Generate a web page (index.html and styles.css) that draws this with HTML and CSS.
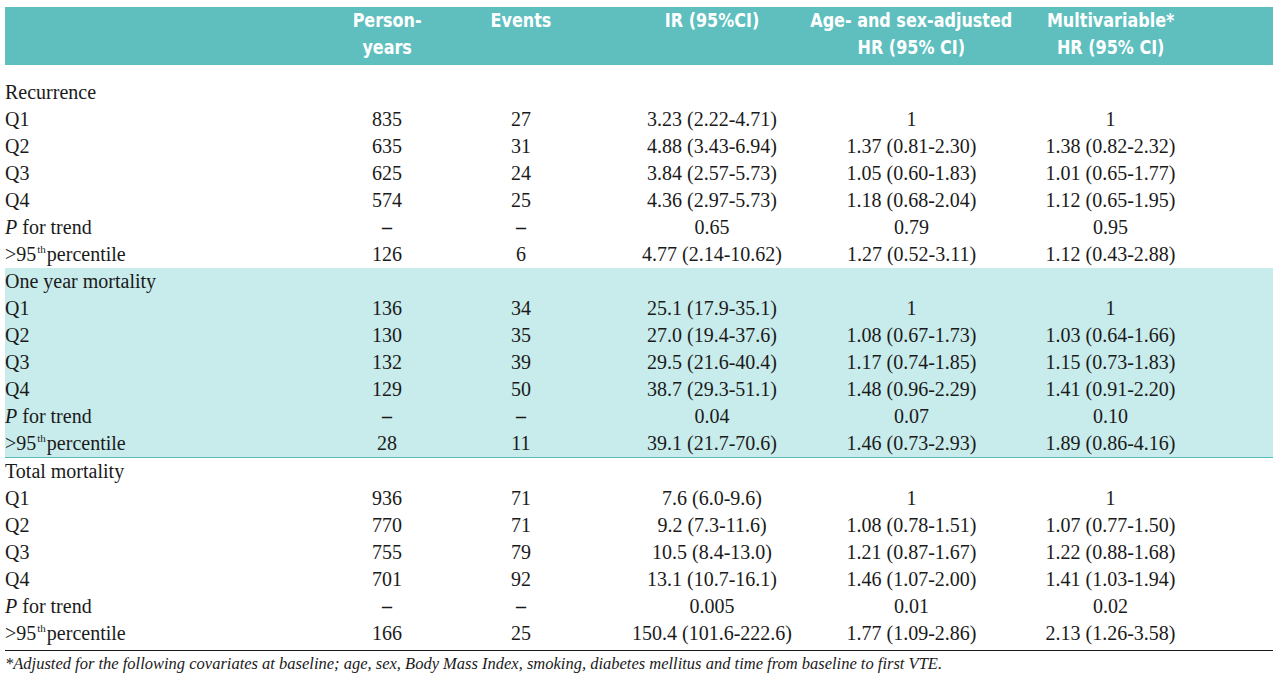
FILE: index.html
```html
<!DOCTYPE html>
<html lang="en">
<head>
<meta charset="utf-8">
<title>Table</title>
<link rel="stylesheet" href="styles.css">
</head>
<body>
<div class="page">
<table class="tbl">
  <colgroup>
    <col class="c-label"><col class="c-py"><col class="c-ev"><col class="c-ir"><col class="c-age"><col class="c-mv">
  </colgroup>
  <thead>
    <tr class="head">
      <th></th>
      <th><span class="hx">Person-<br>years</span></th>
      <th><span class="hx">Events</span></th>
      <th class="ir"><span class="hx">IR (95%CI)</span></th>
      <th><span class="hx">Age- and sex-adjusted<br>HR (95% CI)</span></th>
      <th class="mv"><span class="hx">Multivariable*<br>HR (95% CI)</span></th>
    </tr>
  </thead>
  <tbody class="sec first">
    <tr><td class="lbl">Recurrence</td><td></td><td></td><td class="ir"></td><td></td><td class="mv"></td></tr>
    <tr><td class="lbl">Q1</td><td>835</td><td>27</td><td class="ir">3.23 (2.22-4.71)</td><td>1</td><td class="mv">1</td></tr>
    <tr><td class="lbl">Q2</td><td>635</td><td>31</td><td class="ir">4.88 (3.43-6.94)</td><td>1.37 (0.81-2.30)</td><td class="mv">1.38 (0.82-2.32)</td></tr>
    <tr><td class="lbl">Q3</td><td>625</td><td>24</td><td class="ir">3.84 (2.57-5.73)</td><td>1.05 (0.60-1.83)</td><td class="mv">1.01 (0.65-1.77)</td></tr>
    <tr><td class="lbl">Q4</td><td>574</td><td>25</td><td class="ir">4.36 (2.97-5.73)</td><td>1.18 (0.68-2.04)</td><td class="mv">1.12 (0.65-1.95)</td></tr>
    <tr><td class="lbl"><i>P</i> for trend</td><td class="dash">–</td><td class="dash">–</td><td class="ir">0.65</td><td>0.79</td><td class="mv">0.95</td></tr>
    <tr><td class="lbl">&gt;95<sup>th</sup>percentile</td><td>126</td><td>6</td><td class="ir">4.77 (2.14-10.62)</td><td>1.27 (0.52-3.11)</td><td class="mv">1.12 (0.43-2.88)</td></tr>
  </tbody>
  <tbody class="sec shaded">
    <tr><td class="lbl">One year mortality</td><td></td><td></td><td class="ir"></td><td></td><td class="mv"></td></tr>
    <tr><td class="lbl">Q1</td><td>136</td><td>34</td><td class="ir">25.1 (17.9-35.1)</td><td>1</td><td class="mv">1</td></tr>
    <tr><td class="lbl">Q2</td><td>130</td><td>35</td><td class="ir">27.0 (19.4-37.6)</td><td>1.08 (0.67-1.73)</td><td class="mv">1.03 (0.64-1.66)</td></tr>
    <tr><td class="lbl">Q3</td><td>132</td><td>39</td><td class="ir">29.5 (21.6-40.4)</td><td>1.17 (0.74-1.85)</td><td class="mv">1.15 (0.73-1.83)</td></tr>
    <tr><td class="lbl">Q4</td><td>129</td><td>50</td><td class="ir">38.7 (29.3-51.1)</td><td>1.48 (0.96-2.29)</td><td class="mv">1.41 (0.91-2.20)</td></tr>
    <tr><td class="lbl"><i>P</i> for trend</td><td class="dash">–</td><td class="dash">–</td><td class="ir">0.04</td><td>0.07</td><td class="mv">0.10</td></tr>
    <tr class="last"><td class="lbl">&gt;95<sup>th</sup>percentile</td><td>28</td><td>11</td><td class="ir">39.1 (21.7-70.6)</td><td>1.46 (0.73-2.93)</td><td class="mv">1.89 (0.86-4.16)</td></tr>
  </tbody>
  <tbody class="sec final">
    <tr><td class="lbl">Total mortality</td><td></td><td></td><td class="ir"></td><td></td><td class="mv"></td></tr>
    <tr><td class="lbl">Q1</td><td>936</td><td>71</td><td class="ir">7.6 (6.0-9.6)</td><td>1</td><td class="mv">1</td></tr>
    <tr><td class="lbl">Q2</td><td>770</td><td>71</td><td class="ir">9.2 (7.3-11.6)</td><td>1.08 (0.78-1.51)</td><td class="mv">1.07 (0.77-1.50)</td></tr>
    <tr><td class="lbl">Q3</td><td>755</td><td>79</td><td class="ir">10.5 (8.4-13.0)</td><td>1.21 (0.87-1.67)</td><td class="mv">1.22 (0.88-1.68)</td></tr>
    <tr><td class="lbl">Q4</td><td>701</td><td>92</td><td class="ir">13.1 (10.7-16.1)</td><td>1.46 (1.07-2.00)</td><td class="mv">1.41 (1.03-1.94)</td></tr>
    <tr><td class="lbl"><i>P</i> for trend</td><td class="dash">–</td><td class="dash">–</td><td class="ir">0.005</td><td>0.01</td><td class="mv">0.02</td></tr>
    <tr class="last"><td class="lbl">&gt;95<sup>th</sup>percentile</td><td>166</td><td>25</td><td class="ir">150.4 (101.6-222.6)</td><td>1.77 (1.09-2.86)</td><td class="mv">2.13 (1.26-3.58)</td></tr>
  </tbody>
</table>
<p class="note">*Adjusted for the following covariates at baseline; age, sex, Body Mass Index, smoking, diabetes mellitus and time from baseline to first VTE.</p>
</div>
</body>
</html>
```

FILE: styles.css
```css
html, body {
  margin: 0;
  padding: 0;
  background: #ffffff;
}

.page {
  padding: 7px 7px 0 5px;
}

.tbl {
  width: 1268px;
  border-collapse: collapse;
  table-layout: fixed;
  font-family: "Liberation Serif", "Times New Roman", serif;
  font-size: 20px;
  color: #1a1a1a;
}

.c-label { width: 315px; }
.c-py { width: 134px; }
.c-ev { width: 134px; }
.c-ir { width: 224px; }
.c-age { width: 199px; }
.c-mv { width: 262px; }

.head th {
  background: #5fbfbf;
  color: #ffffff;
  font-family: "DejaVu Sans", "Liberation Sans", sans-serif;
  font-weight: bold;
  font-size: 20px;
  line-height: 27px;
  vertical-align: top;
  text-align: center;
  padding: 0 0 4px 0;
  height: 54px;
  white-space: nowrap;
}

.hx {
  display: inline-block;
  margin: 0 -60px;
  transform: scaleX(0.8);
  transform-origin: 50% 50%;
}

.tbl td {
  padding: 0;
  height: 27px;
  line-height: 27px;
  text-align: center;
  white-space: nowrap;
  vertical-align: middle;
}

.tbl td.lbl {
  text-align: left;
}

.tbl .ir { padding-left: 24px; }
.tbl .mv { padding-right: 63px; }

.first tr:first-child td {
  padding-top: 14px;
}

.shaded tr td {
  background: #c8ebeb;
}

.shaded tr.last td {
  border-bottom: 1px solid #5bbcbc;
}

.final tr.last td {
  border-bottom: 1px solid #1a1a1a;
  padding-bottom: 3px;
}

.dash {
  font-weight: bold;
}

sup {
  font-size: 11px;
  line-height: 0;
  vertical-align: 8px;
  margin: 0 1px 0 1px;
}

.note {
  margin: 3px 0 0 0;
  font-family: "Liberation Serif", "Times New Roman", serif;
  font-style: italic;
  font-size: 16.5px;
  color: #1a1a1a;
}
```
